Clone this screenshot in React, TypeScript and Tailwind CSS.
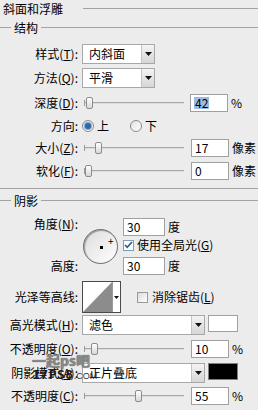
import React from 'react';

// 斜面和浮雕 面板（图层样式）
const font = { fontFamily: '"Noto Sans CJK SC", "Liberation Sans", sans-serif' };

const U = ({ c }: { c: string }) => <span className="underline underline-offset-1">{c}</span>;

const Label = ({ children }: { children: React.ReactNode }) => (
  <div className="w-[80px] shrink-0 pr-[2px] text-right leading-none">{children}</div>
);

const Arrow = () => (
  <div className="flex h-full w-[13px] items-center justify-center border-l border-[#c4c4c4] bg-gradient-to-b from-[#f4f4f4] to-[#d6d6d6]">
    <svg width="7" height="4" viewBox="0 0 7 4">
      <path d="M0 0h7L3.5 4z" fill="#111" />
    </svg>
  </div>
);

const Select = ({ value, w }: { value: string; w: string }) => (
  <div className={`flex h-[20px] ${w} items-center border border-[#a8a8a8] bg-white`}>
    <div className="flex-1 pl-[6px] text-[12px] leading-none">{value}</div>
    <Arrow />
  </div>
);

const Slider = ({ pos }: { pos: number }) => (
  <div className="relative h-[18px] w-[104px] shrink-0">
    <div className="absolute left-[4px] right-0 top-[8px] h-[2px] border-t border-[#a9a9a9] border-b-white bg-[#dcdcdc]" />
    <div className="absolute left-[4px] top-[6px] h-[6px] w-px bg-[#9a9a9a]" />
    <div
      className="absolute top-[3px] h-[12px] w-[7px] rounded-[2px] border border-[#8c8c8c] bg-gradient-to-b from-white to-[#d8d8d8]"
      style={{ left: pos }}
    />
  </div>
);

const Num = ({ v, sel, w = 'w-[38px]' }: { v: string; sel?: boolean; w?: string }) => (
  <div className={`flex h-[18px] ${w} items-center border border-[#a0a0a0] bg-white pl-[3px] text-[12px] leading-none`}>
    {sel ? <span className="bg-[#9bbbe3] px-px">{v}</span> : v}
  </div>
);

const Row = ({ h, mt, children }: { h: string; mt: string; children: React.ReactNode }) => (
  <div className={`flex ${h} ${mt} items-center`}>{children}</div>
);

const GroupHead = ({ title }: { title: string }) => (
  <div className="flex items-center">
    <div className="h-[2px] w-[11px] border-t border-[#a3a3a3] border-b-white" />
    <div className="px-[3px] leading-none">{title}</div>
    <div className="h-[2px] flex-1 border-t border-[#a3a3a3] border-b-white" />
  </div>
);

const Radio = ({ on }: { on?: boolean }) => (
  <div className="flex h-[12px] w-[12px] items-center justify-center rounded-full border border-[#8a8a8a] bg-gradient-to-br from-[#e2e2e2] to-white">
    {on && <div className="h-[6px] w-[6px] rounded-full bg-[#2c6aa8] shadow-[0_0_0_1px_#7fa9d6]" />}
  </div>
);

export default function App() {
  return (
    <div className="relative h-[410px] w-[258px] overflow-hidden bg-[#ececec] text-[12px] text-black" style={font}>
      {/* 标题 */}
      <div className="flex h-[18px] items-center">
        <div className="pl-[3px] leading-none">斜面和浮雕</div>
        <div className="ml-[20px] h-[2px] flex-1 border-t border-[#a3a3a3] border-b-white" />
      </div>

      <div className="h-[20px] flex flex-col justify-center">
        <GroupHead title="结构" />
      </div>

      <Row h="h-[20px]" mt="mt-[6px]">
        <Label>样式(<U c="T" />):</Label>
        <div className="pl-[2px]"><Select value="内斜面" w="w-[73px]" /></div>
      </Row>
      <Row h="h-[20px]" mt="mt-[4px]">
        <Label>方法(<U c="Q" />):</Label>
        <div className="pl-[2px]"><Select value="平滑" w="w-[73px]" /></div>
      </Row>
      <Row h="h-[19px]" mt="mt-[5px]">
        <Label>深度(<U c="D" />):</Label>
        <Slider pos={6} />
        <div className="ml-[6px]"><Num v="42" sel /></div>
        <div className="pl-[3px]">%</div>
      </Row>
      <Row h="h-[18px]" mt="mt-[5px]">
        <Label>方向:</Label>
        <div className="ml-[2px] flex items-center gap-[3px]">
          <Radio on />
          <span className="leading-none">上</span>
        </div>
        <div className="ml-[21px] flex items-center gap-[3px]">
          <Radio />
          <span className="leading-none">下</span>
        </div>
      </Row>
      <Row h="h-[18px]" mt="mt-[4px]">
        <Label>大小(<U c="Z" />):</Label>
        <Slider pos={15} />
        <div className="ml-[7px]"><Num v="17" /></div>
        <div className="pl-[3px]">像素</div>
      </Row>
      <Row h="h-[18px]" mt="mt-[5px]">
        <Label>软化(<U c="F" />):</Label>
        <Slider pos={5} />
        <div className="ml-[7px]"><Num v="0" /></div>
        <div className="pl-[3px]">像素</div>
      </Row>

      <div className="mt-[8px] h-[2px] border-t border-[#a3a3a3] border-b-white" />

      <div className="mt-[4px] flex h-[14px] flex-col justify-center">
        <GroupHead title="阴影" />
      </div>

      {/* 角度 / 高度 */}
      <div className="mt-[10px] flex h-[56px]">
        <div className="flex w-[80px] flex-col justify-between">
          <Label>角度(<U c="N" />):</Label>
          <div className="pb-[2px]"><Label>高度:</Label></div>
        </div>
        <div className="ml-[3px] mt-[11px]">
          <div className="relative h-[35px] w-[35px] rounded-full border border-[#6b6b6b] bg-gradient-to-br from-[#dcdcdc] to-white shadow-[inset_1px_1px_1px_#9a9a9a]">
            <div className="absolute left-[16px] top-[16px] h-[3px] w-[3px] bg-black" />
            <div className="absolute left-[24px] top-[6px] text-[10px] leading-none">+</div>
          </div>
        </div>
        <div className="ml-[5px] flex flex-col">
          <div className="flex items-center">
            <Num v="30" w="w-[42px]" />
            <span className="pl-[3px] leading-none">度</span>
          </div>
          <div className="mt-[3px] flex items-center">
            <div className="flex h-[11px] w-[11px] items-center justify-center border border-[#7f9db9] bg-white">
              <svg width="9" height="8" viewBox="0 0 9 8">
                <path d="M1 4l2.2 2.3L8 1" stroke="#2a5fa3" strokeWidth="1.8" fill="none" />
              </svg>
            </div>
            <span className="pl-[3px] leading-none">使用全局光(<U c="G" />)</span>
          </div>
          <div className="mt-[6px] flex items-center">
            <Num v="30" w="w-[42px]" />
            <span className="pl-[3px] leading-none">度</span>
          </div>
        </div>
      </div>

      {/* 光泽等高线 */}
      <div className="mt-[7px] flex h-[32px] items-center">
        <Label>光泽等高线:</Label>
        <div className="ml-[2px] flex h-[32px] w-[39px] border border-[#4a4a4a] bg-white">
          <svg width="29" height="30" viewBox="0 0 29 30" className="block">
            <path d="M0 30L29 0V30z" fill="#8c8c8c" />
          </svg>
          <div className="flex flex-1 items-center justify-center border-l border-[#9a9a9a]">
            <svg width="5" height="3" viewBox="0 0 5 3"><path d="M0 0h5L2.5 3z" fill="#111" /></svg>
          </div>
        </div>
        <div className="ml-[16px] flex items-center">
          <div className="h-[11px] w-[11px] border border-[#9a9a9a] bg-gradient-to-br from-[#dcdcdc] to-white" />
          <span className="pl-[4px] leading-none">消除锯齿(<U c="L" />)</span>
        </div>
      </div>

      <Row h="h-[20px]" mt="mt-[2px]">
        <Label>高光模式(<U c="H" />):</Label>
        <div className="pl-[2px]"><Select value="滤色" w="w-[123px]" /></div>
        <div className="ml-[3px] h-[17px] w-[30px] self-start border border-[#a0a0a0] bg-white" />
      </Row>
      <Row h="h-[17px]" mt="mt-[5px]">
        <Label>不透明度(<U c="O" />):</Label>
        <Slider pos={11} />
        <div className="ml-[7px]"><Num v="10" /></div>
        <div className="pl-[3px]">%</div>
      </Row>
      <Row h="h-[20px]" mt="mt-[6px]">
        <Label>阴影模式(<U c="A" />):</Label>
        <div className="pl-[2px]"><Select value="正片叠底" w="w-[123px]" /></div>
        <div className="ml-[3px] h-[17px] w-[30px] self-start border border-[#808080] bg-black" />
      </Row>
      <Row h="h-[17px]" mt="mt-[4px]">
        <Label>不透明度(<U c="C" />):</Label>
        <Slider pos={55} />
        <div className="ml-[7px]"><Num v="55" /></div>
        <div className="pl-[3px]">%</div>
      </Row>

      {/* 水印 */}
      <div className="absolute left-[32px] top-[353px] text-[14px] font-bold leading-none text-[#8a8a8a] [text-shadow:0_0_1px_#333]">
        一起ps吧
      </div>
      <div className="absolute left-[32px] top-[368px] flex items-end leading-none">
        <span className="text-[13px] font-black tracking-[0.5px] text-[#1a1a1a]" style={{ fontFamily: '"DejaVu Sans Mono", monospace' }}>17PS8</span>
        <span className="text-[9px] text-[#333]" style={{ fontFamily: '"Liberation Sans", sans-serif' }}>.COM</span>
      </div>
    </div>
  );
}
